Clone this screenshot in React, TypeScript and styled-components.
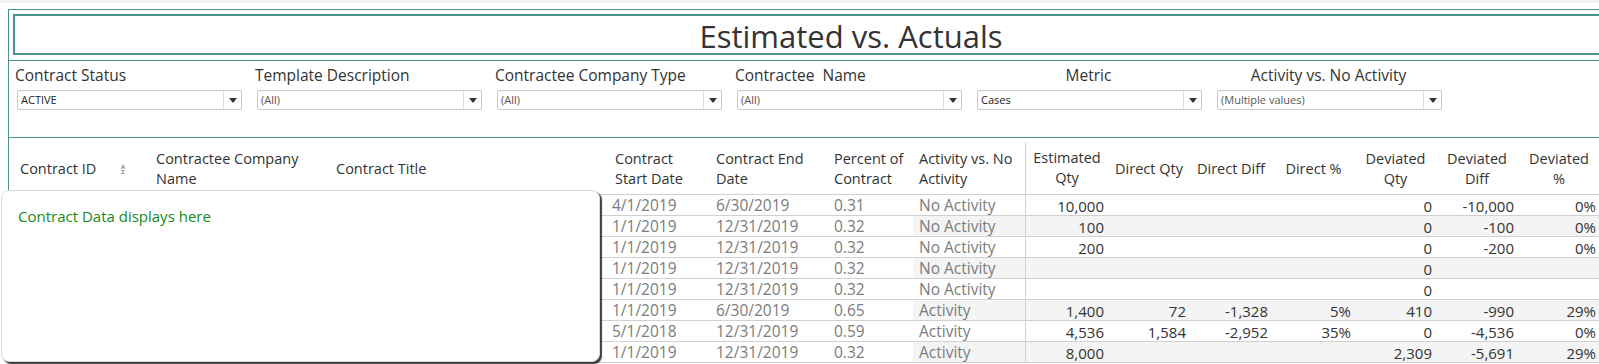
import React from "react"
import styled, { createGlobalStyle } from "styled-components"

const TEAL = "#4a938b"
const FONT = `"Open Sans", "Noto Sans", sans-serif`

interface Filter {
	label: string
	value: string
	muted?: boolean
	centered?: boolean
}

const filters: Filter[] = [
	{ label: "Contract Status", value: "ACTIVE" },
	{ label: "Template Description", value: "(All)", muted: true },
	{ label: "Contractee Company Type", value: "(All)", muted: true },
	{ label: "Contractee\u00a0 Name", value: "(All)", muted: true },
	{ label: "Metric", value: "Cases", centered: true },
	{ label: "Activity vs. No Activity", value: "(Multiple values)", muted: true, centered: true },
]

interface Row {
	title: boolean
	start: string
	end: string
	pct: string
	activity: string
	nums: string[]
}

const rows: Row[] = [
	{ title: true, start: "4/1/2019", end: "6/30/2019", pct: "0.31", activity: "No Activity", nums: ["10,000", "", "", "", "0", "-10,000", "0%"] },
	{ title: false, start: "1/1/2019", end: "12/31/2019", pct: "0.32", activity: "No Activity", nums: ["100", "", "", "", "0", "-100", "0%"] },
	{ title: false, start: "1/1/2019", end: "12/31/2019", pct: "0.32", activity: "No Activity", nums: ["200", "", "", "", "0", "-200", "0%"] },
	{ title: false, start: "1/1/2019", end: "12/31/2019", pct: "0.32", activity: "No Activity", nums: ["", "", "", "", "0", "", ""] },
	{ title: true, start: "1/1/2019", end: "12/31/2019", pct: "0.32", activity: "No Activity", nums: ["", "", "", "", "0", "", ""] },
	{ title: false, start: "1/1/2019", end: "6/30/2019", pct: "0.65", activity: "Activity", nums: ["1,400", "72", "-1,328", "5%", "410", "-990", "29%"] },
	{ title: false, start: "5/1/2018", end: "12/31/2019", pct: "0.59", activity: "Activity", nums: ["4,536", "1,584", "-2,952", "35%", "0", "-4,536", "0%"] },
	{ title: true, start: "1/1/2019", end: "12/31/2019", pct: "0.32", activity: "Activity", nums: ["8,000", "", "", "", "2,309", "-5,691", "29%"] },
]

const textHeaders = [
	["Contractee Company", "Name"],
	["Contract Title"],
	["Contract", "Start Date"],
	["Contract End", "Date"],
	["Percent of", "Contract"],
	["Activity vs. No", "Activity"],
]

const numHeaders = [
	["Estimated", "Qty"],
	["Direct Qty"],
	["Direct Diff"],
	["Direct %"],
	["Deviated", "Qty"],
	["Deviated", "Diff"],
	["Deviated", "%"],
]

const App: React.FC = () => {
	return (
		<Page>
			<GlobalStyle />
			<TopStrip />
			<Dashboard>
				<TitleBox>Estimated vs. Actuals</TitleBox>
				<FilterPanel>
					{filters.map((f) => (
						<FilterGroup key={f.label}>
							<FilterLabel $centered={f.centered}>{f.label}</FilterLabel>
							<Dropdown>
								<DropdownValue $muted={f.muted}>{f.value}</DropdownValue>
								<DropdownArrow>
									<svg width="8" height="5" viewBox="0 0 8 5">
										<path d="M0 0 L8 0 L4 5 Z" fill="#333" />
									</svg>
								</DropdownArrow>
							</Dropdown>
						</FilterGroup>
					))}
				</FilterPanel>
				<Table>
					<HeaderRow>
						<HeadCell $first>
							<div>Contract ID</div>
							<SortIcon>
								<span>A</span>
								<span>Z</span>
							</SortIcon>
						</HeadCell>
						{textHeaders.map((lines) => (
							<HeadCell key={lines.join(" ")}>
								{lines.map((l) => (
									<div key={l}>{l}</div>
								))}
							</HeadCell>
						))}
						{numHeaders.map((lines, i) => (
							<NumHeadCell key={i} $divider={i === 0}>
								{lines.map((l) => (
									<div key={l}>{l}</div>
								))}
							</NumHeadCell>
						))}
					</HeaderRow>
					{rows.map((r, i) => {
						const shaded = i % 2 === 1
						return (
							<DataRow key={i}>
								<Cell />
								<Cell />
								<TitleCell>{r.title ? "Contract title text placeholder value" : ""}</TitleCell>
								<Cell $tight>{r.start}</Cell>
								<Cell>{r.end}</Cell>
								<Cell>{r.pct}</Cell>
								<Cell $shaded={shaded}>{r.activity}</Cell>
								{r.nums.map((n, j) => (
									<NumCell key={j} $shaded={shaded} $divider={j === 0}>
										{n}
									</NumCell>
								))}
							</DataRow>
						)
					})}
				</Table>
			</Dashboard>
			<Overlay>
				<OverlayText>Contract Data displays here</OverlayText>
			</Overlay>
		</Page>
	)
}

const GlobalStyle = createGlobalStyle`
	html, body {
		margin: 0;
		padding: 0;
		background: #fff;
		overflow: hidden;
	}
	body {
		font-family: ${FONT};
		color: #333;
	}
`

const Page = styled.div`
	position: relative;
	width: 1599px;
	height: 364px;
	overflow: hidden;
	background: #fff;
`

const TopStrip = styled.div`
	height: 3px;
	background: #f2f2f2;
`

const Dashboard = styled.div`
	margin: 6px 0 0 8px;
	border-top: 1px solid ${TEAL};
	border-left: 1px solid ${TEAL};
`

const TitleBox = styled.div`
	margin: 4px 0 0 4px;
	width: 1672px;
	height: 35px;
	padding-top: 2px;
	border: 2px solid ${TEAL};
	display: flex;
	align-items: center;
	justify-content: center;
	font-size: 31px;
	color: #333;
	box-sizing: content-box;
`

const FilterPanel = styled.div`
	margin-top: 5px;
	height: 72px;
	padding: 4px 0 0 6px;
	border-top: 1px solid ${TEAL};
	border-bottom: 1px solid ${TEAL};
	display: flex;
	gap: 13px;
	box-sizing: content-box;
`

const FilterGroup = styled.div`
	width: 227px;
	display: flex;
	flex-direction: column;
	gap: 5px;
`

const FilterLabel = styled.div<{ $centered?: boolean }>`
	height: 20px;
	line-height: 20px;
	font-size: 15.5px;
	color: #333;
	white-space: pre;
	text-align: ${(p) => (p.$centered ? "center" : "left")};
`

const Dropdown = styled.div`
	margin-left: 2px;
	width: 225px;
	height: 20px;
	box-sizing: border-box;
	border: 1px solid #c8c8c8;
	border-radius: 2px;
	display: flex;
	background: #fff;
`

const DropdownValue = styled.div<{ $muted?: boolean }>`
	flex: 1;
	padding-left: 3px;
	font-size: 11px;
	line-height: 18px;
	color: ${(p) => (p.$muted ? "#555" : "#222")};
`

const DropdownArrow = styled.div`
	width: 17px;
	border-left: 1px solid #dcdcdc;
	display: flex;
	align-items: center;
	justify-content: center;
`

const COLS = "141px 180px 279px 101px 118px 85px 112px 83px 82px 82px 83px 81px 82px 82px"

const Table = styled.div`
	display: flex;
	flex-direction: column;
`

const HeaderRow = styled.div`
	display: grid;
	grid-template-columns: ${COLS};
	height: 56px;
	border-bottom: 1px solid #d0d0d0;
`

const HeadCell = styled.div<{ $first?: boolean }>`
	position: relative;
	display: flex;
	flex-direction: column;
	justify-content: center;
	padding: 5px 0 0 ${(p) => (p.$first ? "11px" : "6px")};
	font-size: 14.5px;
	line-height: 20px;
	color: #333;
	white-space: nowrap;
`

const NumHeadCell = styled.div<{ $divider?: boolean }>`
	display: flex;
	flex-direction: column;
	align-items: center;
	justify-content: center;
	padding-top: ${(p) => (p.$divider ? "0" : "5px")};
	margin-top: ${(p) => (p.$divider ? "4px" : "0")};
	font-size: 14.5px;
	line-height: 20px;
	color: #333;
	white-space: nowrap;
	border-left: ${(p) => (p.$divider ? "1px solid #d0d0d0" : "none")};
`

const SortIcon = styled.span`
	position: absolute;
	left: 112px;
	top: 27px;
	display: flex;
	flex-direction: column;
	font-size: 6px;
	line-height: 5px;
	color: #888;
	font-weight: 700;
`

const DataRow = styled.div`
	display: grid;
	grid-template-columns: ${COLS};
	height: 20px;
	border-bottom: 1px solid #d0d0d0;
`

const Cell = styled.div<{ $shaded?: boolean; $tight?: boolean }>`
	padding-left: ${(p) => (p.$tight ? "3px" : "6px")};
	font-size: 15.5px;
	line-height: 20px;
	color: #7c7c7c;
	white-space: nowrap;
	overflow: hidden;
	background: ${(p) => (p.$shaded ? "#f4f4f4" : "transparent")};
`

const TitleCell = styled(Cell)`
	text-overflow: ellipsis;
`

const NumCell = styled.div<{ $shaded?: boolean; $divider?: boolean }>`
	padding-right: 4px;
	font-size: 15px;
	line-height: 22px;
	height: 20px;
	color: #333;
	text-align: right;
	white-space: nowrap;
	background: ${(p) => (p.$shaded ? "#f4f4f4" : "transparent")};
	border-left: ${(p) => (p.$divider ? "1px solid #d0d0d0" : "none")};
`

const Overlay = styled.div`
	position: absolute;
	left: 1px;
	top: 190px;
	width: 597px;
	height: 170px;
	background: #fff;
	border: 1px solid #d8d8d8;
	border-radius: 8px;
	box-shadow: 2px 2px 1px rgba(30, 30, 30, 0.85);
`

const OverlayText = styled.div`
	padding: 15px 0 0 16px;
	font-size: 15px;
	line-height: 20px;
	color: #178a17;
`

export default App
